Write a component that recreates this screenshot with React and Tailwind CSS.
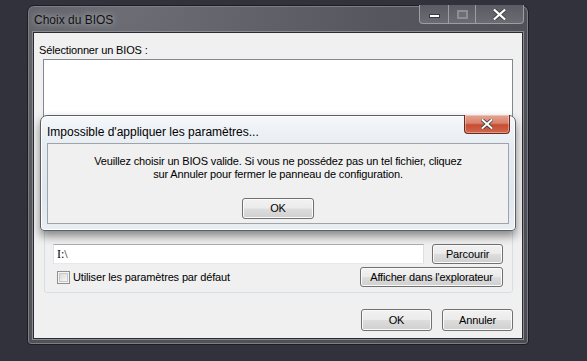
import React from "react";

const font = "font-['Liberation_Sans',Arial,sans-serif]";

function Btn({ children, className = "" }) {
  return (
    <div
      className={`flex items-center justify-center rounded-[3px] border border-[#707070] bg-[linear-gradient(#f2f2f2,#ebebeb_48%,#dddddd_52%,#cfcfcf)] shadow-[inset_0_0_0_1px_#fbfbfb] text-[11px] text-black ${className}`}
    >
      {children}
    </div>
  );
}

function CloseX({ size = 12 }) {
  return (
    <svg width={size} height={size - 2} viewBox="0 0 12 10">
      <path
        d="M1.5 1 L10.5 9 M10.5 1 L1.5 9"
        stroke="#3a3a3a"
        strokeWidth="3.6"
        strokeLinecap="square"
      />
      <path
        d="M1.5 1 L10.5 9 M10.5 1 L1.5 9"
        stroke="#ffffff"
        strokeWidth="2"
        strokeLinecap="square"
      />
    </svg>
  );
}

export default function App() {
  return (
    <div className={`relative w-[587px] h-[361px] overflow-hidden bg-[#31323b] ${font}`}>

      {/* main window */}
      <div className="absolute left-[27px] top-[5px] w-[502px] h-[340px] rounded-t-[7px] rounded-b-[4px] border border-[#1d1d22] bg-[radial-gradient(ellipse_at_20%_0%,#6c6d75,#55565e_45%,#4a4b53)] shadow-[inset_0_0_0_1px_#7c7d85] flex flex-col">

        <div className="h-[26px] flex justify-between">
          <div className="pl-[6px] pt-[5px] text-[12px] text-[#111] [text-shadow:0_0_6px_rgba(255,255,255,0.55),0_0_10px_rgba(255,255,255,0.35)]">
            Choix du BIOS
          </div>
          <div className="mr-[4px] -mt-[1px] h-[19px] flex rounded-b-[4px] border border-t-0 border-[#9c9da3] bg-[linear-gradient(#5a5b63,#6a6b73)]">
            <div className="w-[29px] flex items-center justify-center border-r border-[#9c9da3]">
              <div className="w-[11px] h-[4px] mt-[4px] bg-white border border-[#3a3a3a]" />
            </div>
            <div className="w-[27px] flex items-center justify-center border-r border-[#9c9da3]">
              <div className="w-[11px] h-[9px] border-[2px] border-[#8e8f95] bg-[#6d6e75]" />
            </div>
            <div className="w-[47px] flex items-center justify-center">
              <CloseX size={13} />
            </div>
          </div>
        </div>

        {/* client area */}
        <div className="mx-[5px] mb-[5px] flex-1 border border-[#2a2a30] shadow-[0_0_0_1px_#8a8b91] bg-[#f0f0f0] flex flex-col pt-[10px] text-[11px] tracking-[-0.15px] text-black">
          <div className="pl-[5px] leading-[14px]">Sélectionner un BIOS :</div>

          <div className="ml-[9px] mr-[9px] mt-[2px] h-[165px] border border-[#828790] bg-white" />

          <div className="ml-[10px] mr-[9px] mt-[6px] h-[63px] rounded-[3px] border border-[#d5dfe5] flex flex-col pt-[13px]">
            <div className="flex items-center pl-[8px] pr-[9px] gap-[8px]">
              <div className="w-[372px] h-[20px] border border-[#abadb3] border-l-[#e2e3ea] border-r-[#dbdfe6] border-b-[#e3e9ef] bg-white flex items-center pl-[3px] font-['Liberation_Serif',serif] text-[12px] tracking-normal">
                I:\
              </div>
              <Btn className="w-[71px] h-[20px]">Parcourir</Btn>
            </div>
            <div className="flex items-center justify-between pl-[12px] pr-[9px] mt-[3px]">
              <div className="flex items-center gap-[3px]">
                <div className="w-[13px] h-[13px] border border-[#8e8f8f] bg-[#f4f4f4] p-[1px]">
                  <div className="w-full h-full border border-[#c9c9c9] bg-[linear-gradient(135deg,#dadada,#f6f6f6)]" />
                </div>
                <span>Utiliser les paramètres par défaut</span>
              </div>
              <Btn className="w-[143px] h-[20px]">Afficher dans l'explorateur</Btn>
            </div>
          </div>

          <div className="flex justify-end gap-[10px] pr-[9px] mt-[16px]">
            <Btn className="w-[71px] h-[22px]">OK</Btn>
            <Btn className="w-[71px] h-[22px]">Annuler</Btn>
          </div>
        </div>
      </div>

      {/* error popup */}
      <div className="absolute left-[40px] top-[115px] w-[476px] h-[116px] rounded-t-[7px] rounded-b-[4px] border border-[#5b5e63] bg-[linear-gradient(180deg,#f4f7fa,#e5ebf1_30%,#dfe6ed_70%,#e9eef3)] shadow-[inset_0_0_0_1px_#ffffff,0_5px_10px_rgba(0,0,0,0.45)] flex flex-col">
        <div className="h-[27px] flex justify-between">
          <div className="pl-[6px] pt-[7px] text-[12px] text-black">
            Impossible d'appliquer les paramètres...
          </div>
          <div className="mr-[5px] -mt-[1px] w-[46px] h-[19px] rounded-b-[4px] border border-t-0 border-[#6b2a1e] bg-[linear-gradient(#e8a493,#d8826c_45%,#c84b30_55%,#d06a4f)] shadow-[inset_0_0_0_1px_rgba(255,255,255,0.35)] flex items-center justify-center">
            <CloseX size={12} />
          </div>
        </div>
        <div className="mx-[6px] mb-[6px] flex-1 border border-[#9ea4aa] bg-[#f0f0f0] flex flex-col items-center pt-[11px] text-[11px] leading-[13px] tracking-[-0.15px] text-black">
          <div className="text-center">
            Veuillez choisir un BIOS valide. Si vous ne possédez pas un tel fichier, cliquez
            <br />
            sur Annuler pour fermer le panneau de configuration.
          </div>
          <Btn className="mt-[17px] w-[72px] h-[21px] border-[#3c7fb1] shadow-[inset_0_0_0_1px_#48d2f9]">OK</Btn>
        </div>
      </div>
    </div>
  );
}
